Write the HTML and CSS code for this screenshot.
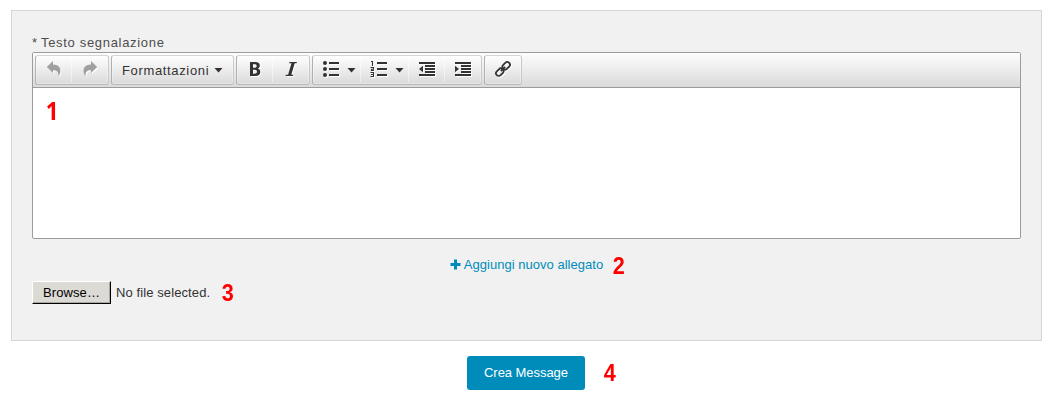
FILE: index.html
```html
<!DOCTYPE html>
<html lang="it">
<head>
<meta charset="utf-8">
<title>Segnalazione</title>
<link rel="stylesheet" href="styles.css">
</head>
<body>
<main class="panel">
  <div class="label"><span class="required">*</span><span class="label-text">Testo segnalazione</span></div>
  <section class="editor">
    <div class="toolbar">
      <div class="group">
        <button class="tool muted" aria-label="Annulla"><svg width="16" height="16" viewBox="0 0 16 16"><path d="M.8 6 7 0v3.500c7 .1 9.700 5.500 5.500 12.200.3-4.700-1.300-6.400-5.500-6.500V12z"/></svg></button>
        <button class="tool muted" aria-label="Ripeti"><svg width="16" height="16" viewBox="0 0 16 16"><path d="M15.200 6 9 0v3.500C2 3.600-.7 9 3.500 15.700c-.3-4.700 1.300-6.400 5.500-6.500V12z"/></svg></button>
      </div>
      <div class="group">
        <button class="tool format"><span class="format-text">Formattazioni</span><i class="caret"></i></button>
      </div>
      <div class="group">
        <button class="tool" aria-label="Grassetto"><svg width="16" height="16" viewBox="0 0 16 16"><path fill-rule="evenodd" d="M3 1h5.300c3 0 4.500 1.300 4.500 3.500 0 1.500-.7 2.500-2 3.100 1.700.5 2.500 1.600 2.500 3.300C13.300 13.600 11.400 15 8.500 15H3zm3 2.200v3.500h1.500c1.500 0 2.200-.6 2.200-1.800S9 3.200 7.600 3.200zm0 5.600v4h1.700c1.500 0 2.300-.7 2.300-2s-.8-2-2.300-2z"/></svg></button>
        <button class="tool" aria-label="Corsivo"><svg width="16" height="16" viewBox="0 0 16 16"><path d="M6.500 1H14l-.4 1.200h-1.900L8.300 13.800h2L10 15H2.500l.4-1.200h2.200L8.500 2.200H6.100z"/></svg></button>
      </div>
      <div class="group">
        <button class="tool list" aria-label="Elenco puntato"><svg width="18" height="16" viewBox="0 0 18 16"><circle cx="3" cy="2" r="2"/><circle cx="3" cy="8" r="2"/><circle cx="3" cy="14" r="2"/><path d="M7 1h10v2H7zM7 7h10v2H7zM7 13h10v2H7z"/></svg><i class="caret"></i></button>
        <button class="tool list" aria-label="Elenco numerato"><svg width="18" height="16" viewBox="0 0 18 16"><path d="M7 1h10v2H7zM7 7h10v2H7zM7 13h10v2H7z"/><path class="line" d="M1 .5h1.500V5M.5 6.500h3v1.700h-2v1.300h2.500M.5 11.500h3v4h-3M1 13.500h2.500"/></svg><i class="caret"></i></button>
        <button class="tool" aria-label="Riduci rientro"><svg width="18" height="16" viewBox="0 0 18 16"><path d="M1 1h16v2H1zM7 4h10v2H7zM7 7h10v2H7zM7 10h10v2H7zM1 13h16v2H1zM5 4.800v6.400L1 8z"/></svg></button>
        <button class="tool" aria-label="Aumenta rientro"><svg width="18" height="16" viewBox="0 0 18 16"><path d="M1 1h16v2H1zM7 4h10v2H7zM7 7h10v2H7zM7 10h10v2H7zM1 13h16v2H1zM1 4.800v6.400L5 8z"/></svg></button>
      </div>
      <div class="group">
        <button class="tool" aria-label="Collegamento"><svg width="16" height="16" viewBox="0 0 16 16"><g class="link-line" transform="rotate(-45 8 8)"><rect x="-.7" y="5.300" width="8.300" height="5.400" rx="2.700"/><rect x="8.400" y="5.300" width="8.300" height="5.400" rx="2.700"/><path d="M5 8h6"/></g></svg></button>
      </div>
    </div>
    <div class="content"><span class="num note-one">1</span></div>
  </section>
  <div class="attach"><a class="add"><svg class="plus" width="11" height="11" viewBox="0 0 11 11"><path d="M4 .5h3V4h3.500v3H7v3.500H4V7H.5V4H4z"/></svg><span class="add-text">Aggiungi nuovo allegato</span><span class="num note-two">2</span></a></div>
  <div class="file"><button class="browse"><span class="browse-text">Browse…</span></button><span class="file-text">No file selected.</span><span class="num note-three">3</span></div>
</main>
<div class="actions"><button class="submit"><span class="submit-text">Crea Message</span><span class="num note-four">4</span></button></div>
</body>
</html>
```
FILE: styles.css
```css
* { box-sizing: border-box; }
body { margin: 0; padding: 10px 10px 0 11px; background: #fff; color: #4d4d4d; font: 13px/16px "Liberation Sans", Arial, sans-serif; }
button { margin: 0; padding: 0; border: 0; background: none; color: inherit; font: inherit; }
span { white-space: nowrap; }
.panel { height: 331px; padding: 24px 20px 0; border: 1px solid #d6d6d6; background: #f1f1f1; }
.label { display: flex; height: 17px; gap: 4px; }
.required { width: 5px; }
.label-text { letter-spacing: .68px; }
.editor { height: 187px; border: 1px solid #9c9c9c; border-radius: 2px; background: #fff; }
.toolbar { display: flex; gap: 2px; height: 35px; padding: 2px; border-bottom: 1px solid #9c9c9c; background: linear-gradient(#fdfdfd, #dadada); }
.group { display: flex; height: 30px; border: 1px solid; border-color: #d5d5d5 #c8c8c8 #b8b8b8 #b0b0b0; border-radius: 3px; background: linear-gradient(#fefefe, #dadada); box-shadow: inset 0 0 0 1px #ffffff55; }
.tool { display: flex; align-items: center; justify-content: center; width: 36px; height: 26px; color: #333; }
.tool + .tool { box-shadow: -1px 0 #ffffff70; }
.muted { color: #a0a0a0; }
svg { display: block; fill: currentColor; filter: drop-shadow(1px 1px 0 #fff); }
.line { fill: none; stroke: currentColor; stroke-width: 1.1; }
.link-line { fill: none; stroke: currentColor; stroke-width: 1.8; }
.format { width: 121px; justify-content: flex-start; padding: 3px 0 0 10px; gap: 5px; }
.format-text { width: 87px; letter-spacing: .65px; text-align: left; }
.list { width: 48px; gap: 7px; padding-left: 4px; }
.caret { width: 9px; height: 5px; margin-top: 2px; background: #333; clip-path: polygon(0 0, 100% 0, 50% 100%); }
.format .caret { margin-top: -1px; }
.content { padding: 9px 12px; }
.num { display: inline-block; color: #f00; font: bold 24px/26px "Liberation Sans", Arial, sans-serif; letter-spacing: 0; transform: scaleX(.9); }
.note-one { font-family: "Open Sans", sans-serif; font-size: 25px; }
.attach { display: flex; justify-content: center; height: 42px; padding-top: 18px; color: #008cba; }
.add { position: relative; display: flex; gap: 3px; }
.plus { margin-top: 2px; filter: none; }
.add-text { letter-spacing: .03px; }
.note-two { position: absolute; left: calc(100% + 9px); top: -4px; }
.file { display: flex; align-items: center; height: 23px; color: #333; }
.browse { width: 79px; height: 23px; border: 1px solid; border-color: #fff #000 #000 #fff; background: #dcdad5; color: #000; box-shadow: inset -1px -1px #aaa89f; }
.browse-text { letter-spacing: .1px; }
.file-text { margin-left: 5px; letter-spacing: .1px; }
.note-three { margin-left: 11px; }
.actions { display: flex; justify-content: center; padding: 15px 1px 0 0; }
.submit { position: relative; width: 118px; height: 34px; border-radius: 3px; background: #008cba; color: #fff; }
.submit-text { letter-spacing: -.05px; }
.note-four { position: absolute; left: 136px; top: 4px; }
```
